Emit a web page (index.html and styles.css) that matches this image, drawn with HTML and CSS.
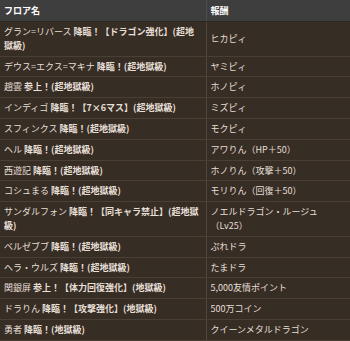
FILE: index.html
```html
<!DOCTYPE html>
<html lang="ja">
<head>
<meta charset="utf-8">
<title>フロア一覧</title>
<link rel="stylesheet" href="styles.css">
</head>
<body>
<table class="floors">
  <colgroup><col class="c-floor"><col class="c-reward"></colgroup>
  <thead>
    <tr><th>フロア名</th><th>報酬</th></tr>
  </thead>
  <tbody>
    <tr><td>グラン=リバース <b>降臨！【ドラゴン強化】(超地獄級)</b></td><td>ヒカピィ</td></tr>
    <tr><td>デウス=エクス=マキナ <b>降臨！(超地獄級)</b></td><td>ヤミピィ</td></tr>
    <tr><td>趙雲 <b>参上！(超地獄級)</b></td><td>ホノピィ</td></tr>
    <tr><td>インディゴ <b>降臨！【7×6マス】(超地獄級)</b></td><td>ミズピィ</td></tr>
    <tr><td>スフィンクス <b>降臨！(超地獄級)</b></td><td>モクピィ</td></tr>
    <tr><td>ヘル <b>降臨！(超地獄級)</b></td><td>アワりん（HP＋50）</td></tr>
    <tr><td>西遊記 <b>降臨！(超地獄級)</b></td><td>ホノりん（攻撃＋50）</td></tr>
    <tr><td>コシュまる <b>降臨！(超地獄級)</b></td><td>モリりん（回復＋50）</td></tr>
    <tr><td>サンダルフォン <b>降臨！【同キャラ禁止】(超地獄級)</b></td><td>ノエルドラゴン・ルージュ（Lv25）</td></tr>
    <tr><td>ベルゼブブ <b>降臨！(超地獄級)</b></td><td>ぷれドラ</td></tr>
    <tr><td>ヘラ・ウルズ <b>降臨！(超地獄級)</b></td><td>たまドラ</td></tr>
    <tr><td>関銀屏 <b>参上！【体力回復強化】(地獄級)</b></td><td>5,000友情ポイント</td></tr>
    <tr><td>ドラりん <b>降臨！【攻撃強化】(地獄級)</b></td><td>500万コイン</td></tr>
    <tr><td>勇者 <b>降臨！(地獄級)</b></td><td>クイーンメタルドラゴン</td></tr>
  </tbody>
</table>
</body>
</html>
```

FILE: styles.css
```css
html, body {
  margin: 0;
  padding: 0;
  background: #362d25;
}

body {
  font-family: "Noto Sans CJK JP", "Noto Sans", sans-serif;
}

.floors {
  width: 350px;
  border-collapse: collapse;
  table-layout: fixed;
  font-size: 9px;
  line-height: 13.8px;
  color: #e6dfd6;
  background: #362d25;
}

.c-floor {
  width: 206px;
}

.floors th {
  height: 21px;
  padding: 0 4px;
  background: #3e3e3e;
  color: #ffffff;
  font-weight: bold;
  text-align: left;
  border-bottom: 1px solid #2b2723;
}

.floors th:first-child {
  border-right: 1px solid #4c4c4c;
}

.floors td {
  padding: 3px 4px;
  vertical-align: middle;
  border-bottom: 1px solid #4a3f35;
  font-weight: normal;
}

.floors td:first-child {
  border-right: 1px solid #53473c;
}

.floors td b {
  font-weight: bold;
}
```
